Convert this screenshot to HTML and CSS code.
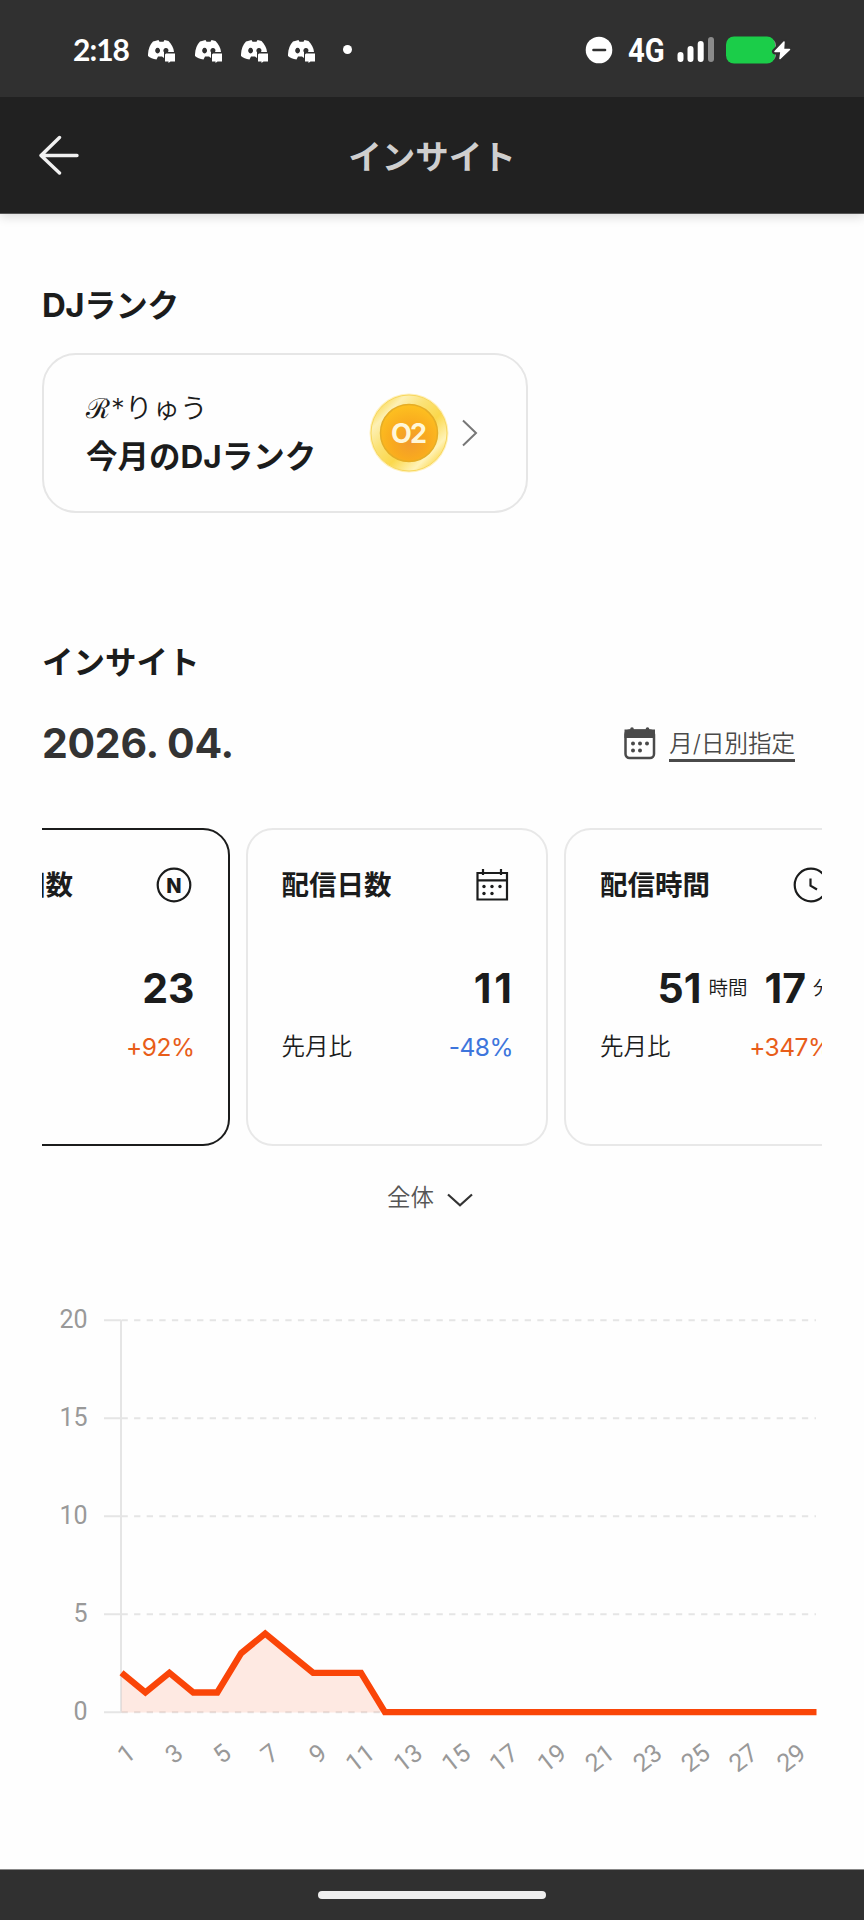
FILE: index.html
```html
<!DOCTYPE html>
<html lang="ja">
<head>
<meta charset="utf-8">
<title>インサイト</title>
<link rel="stylesheet" href="styles.css">
</head>
<body>
<svg class="defs" width="0" height="0">
  <defs>
    <symbol id="chat" viewBox="0 0 28 23">
      <path fill="#fff" fill-rule="evenodd" d="M7 1 L10.500 0 L11.500 1.800 H15.500 L16.500 0 L20.500 1 C23.500 4 25.800 8 26 12 H16 V18 L14 16.600 H10 L8.500 19.500 C5 19 2 17.600 0 16 C-.2 10 1.800 4.500 5 1.500 Z M9.600 7.800 A2.400 2.800 0 1 0 9.610 7.800 Z M17.500 8 A2.400 2.600 0 0 0 15.800 12 H20 A2.400 2.600 0 0 0 17.500 8 Z"/>
      <path fill="#fff" d="M18 13.500 H27 V21.500 H22.500 L20.500 23 V21.500 H17 V14.500 Z"/>
    </symbol>
  </defs>
</svg>

<div class="status">
  <div class="status-left">
    <span class="clock">2:18</span>
    <svg class="chat" width="28" height="23"><use href="#chat"/></svg>
    <svg class="chat" width="28" height="23"><use href="#chat"/></svg>
    <svg class="chat" width="28" height="23"><use href="#chat"/></svg>
    <svg class="chat" width="28" height="23"><use href="#chat"/></svg>
    <span class="dot"></span>
  </div>
  <div class="status-right">
    <svg width="28" height="28" viewBox="0 0 28 28"><circle cx="14" cy="14" r="13.300" fill="#fff"/><path d="M8.500 14h11.500" stroke="#303030" stroke-width="2.600" stroke-linecap="round"/></svg>
    <span class="network">4G</span>
    <svg class="bars" width="38" height="26" viewBox="0 0 38 26" stroke-width="6" stroke-linecap="round" stroke="#fff"><path d="M3.500 18v4M13.500 12v10M23.700 7v15"/><path d="M34 3v19" stroke="#8b8b8b"/></svg>
    <svg class="battery" width="66" height="28" viewBox="0 0 66 28"><rect x="20" y="3" width="30" height="22" rx="6" fill="#8b8b8b"/><rect x="0" y=".5" width="49" height="27" rx="8" fill="#1bcd49"/><path d="M58 6 49 15.500H55L54 22.500 63.500 13.500H57.500Z" fill="#fff" stroke="#303030" stroke-width="6" paint-order="stroke" stroke-linejoin="round"/><path d="M58 6 49 15.500H55L54 22.500 63.500 13.500H57.500Z" fill="#fff" stroke="#fff" stroke-width="1.500" stroke-linejoin="round"/></svg>
  </div>
</div>

<header class="header">
  <svg class="back" width="40" height="40" viewBox="0 0 40 40" fill="none" stroke="#f1f1f1" stroke-width="3.400" stroke-linecap="round" stroke-linejoin="round"><path d="M20.500 2.500 2 20.500 20.500 38M2 20.500H38"/></svg>
  <h1 class="header-title">インサイト</h1>
</header>

<main class="main">
  <h2 class="section-title rank-title">DJ<span class="kana">ランク</span></h2>
  <section class="rank-card">
    <div class="rank-text">
      <div class="rank-name"><span class="script">ℛ</span><span class="star">*</span>りゅう</div>
      <div class="rank-label">今月のDJランク</div>
    </div>
    <svg class="medal" width="82" height="82" viewBox="0 0 82 82">
      <defs>
        <linearGradient id="rim" x1="0.100" y1="0.100" x2="0.900" y2="0.900"><stop offset="0" stop-color="#fbd94f"/><stop offset=".16" stop-color="#fdf0b4"/><stop offset=".36" stop-color="#fbe277"/><stop offset=".6" stop-color="#fbd84c"/><stop offset=".84" stop-color="#fff3b8"/><stop offset="1" stop-color="#fbd648"/></linearGradient>
        <radialGradient id="core" cx=".52" cy=".65" r=".62"><stop offset="0" stop-color="#f19a2e"/><stop offset=".5" stop-color="#f9aa1e"/><stop offset="1" stop-color="#fdbf20"/></radialGradient>
      </defs>
      <circle cx="41" cy="41" r="39.500" fill="#fff1bd"/>
      <circle cx="41" cy="41" r="38" fill="url(#rim)" stroke="#f8d75d" stroke-width="1"/>
      <circle cx="41" cy="41" r="28.500" fill="url(#core)" stroke="#e6ad25" stroke-width="1.500"/>
      <text class="medal-text" x="41" y="50.500" text-anchor="middle" textLength="36">O2</text>
    </svg>
    <svg class="chevron" width="16" height="28" viewBox="0 0 16 28" fill="none" stroke="#777" stroke-width="2"><path d="M1 1.500 14 14 1 26.500"/></svg>
  </section>

  <h2 class="section-title insight-title">インサイト</h2>
  <div class="period">
    <span class="period-date">2026. 04.</span>
    <a class="period-pick">
      <svg width="32" height="34" viewBox="0 0 32 34"><rect x="1.500" y="4.500" width="28.500" height="27.500" rx="4" fill="#fff" stroke="#4a4a4a" stroke-width="2.500"/><path d="M.5 3.500H31V12H.5Z" fill="#4a4a4a"/><path d="M8 3v2M23.500 3v2" stroke="#4a4a4a" stroke-width="3.600" stroke-linecap="round"/><g fill="#4a4a4a"><circle cx="9" cy="17.500" r="2"/><circle cx="16" cy="17.500" r="2"/><circle cx="23" cy="17.500" r="2"/><circle cx="9" cy="24.500" r="2"/><circle cx="16" cy="24.500" r="2"/></g></svg>
      <span class="period-text">月/日別指定</span>
    </a>
  </div>

  <div class="cards">
    <article class="card active">
      <div class="card-head"><span>配信回数</span>
        <svg width="36" height="36" viewBox="0 0 36 36"><circle cx="18" cy="18" r="16.300" fill="none" stroke="#1b1c1c" stroke-width="2.200"/><text class="n" x="18" y="25.500" text-anchor="middle">N</text></svg>
      </div>
      <div class="card-value">23</div>
      <div class="card-diff"><span>先月比</span><span class="pct up">+92%</span></div>
    </article>
    <article class="card">
      <div class="card-head"><span>配信日数</span>
        <svg width="36" height="36" viewBox="0 0 36 36" fill="none" stroke="#1b1c1c" stroke-width="2.200"><path d="M3.500 6H33V32.500H3.500ZM3.500 13.300H33M9 2v6M27 2v6"/><g fill="#1b1c1c" stroke="none"><circle cx="10" cy="19.500" r="1.700"/><circle cx="18" cy="19.500" r="1.700"/><circle cx="26" cy="19.500" r="1.700"/><circle cx="10" cy="26.500" r="1.700"/><circle cx="18" cy="26.500" r="1.700"/></g></svg>
      </div>
      <div class="card-value ones">11</div>
      <div class="card-diff"><span>先月比</span><span class="pct down">-48%</span></div>
    </article>
    <article class="card">
      <div class="card-head"><span>配信時間</span>
        <svg width="36" height="36" viewBox="0 0 36 36" fill="none" stroke="#1b1c1c" stroke-width="2.200"><circle cx="18" cy="18" r="16.300"/><path d="M17.500 11.500V18.700L24 22.500"/></svg>
      </div>
      <div class="card-value time"><span>51</span><span class="unit">時間</span><span class="minutes">17</span><span class="unit">分</span></div>
      <div class="card-diff"><span>先月比</span><span class="pct up">+347%</span></div>
    </article>
  </div>

  <div class="filter">
    <span>全体</span>
    <svg width="26" height="14" viewBox="0 0 26 14" fill="none" stroke="#333" stroke-width="2.200"><path d="M1 1.500 13 12.300 25 1.500"/></svg>
  </div>

  <svg class="chart" width="864" height="500" viewBox="0 1300 864 500">
    <g fill="none" stroke="#e5e5e5" stroke-width="2">
      <path d="M104 1320.200H121M104 1418.200H121M104 1516.200H121M104 1614.200H121M104 1712.200H121M121 1320V1713"/>
      <path stroke-dasharray="6.300" d="M121.500 1320.200H816M121.500 1418.200H816M121.500 1516.200H816M121.500 1614.200H816M121.500 1712.200H816"/>
    </g>
    <path fill="#fc4100" fill-opacity=".11" d="M121.500 1672.800 145.400 1692.500 169.400 1672.800 193.300 1692.500H217.300L241.200 1653.200 265.200 1633.600 289.100 1653.200 313.100 1672.800H361L384.900 1712.500H121.500Z"/>
    <path fill="none" stroke="#fa4508" stroke-width="6.300" d="M121.500 1672.800 145.400 1692.500 169.400 1672.800 193.300 1692.500H217.300L241.200 1653.200 265.200 1633.600 289.100 1653.200 313.100 1672.800H361L384.900 1712.200H816.500"/>
    <g class="axis" text-anchor="end">
      <text x="87.500" y="1328">20</text><text x="87.500" y="1426">15</text><text x="87.500" y="1524">10</text><text x="87.500" y="1622">5</text><text x="87.500" y="1719.500">0</text>
      <text transform="translate(137 1756) rotate(-38)">1</text>
      <text transform="translate(184.900 1756) rotate(-38)">3</text>
      <text transform="translate(232.800 1756) rotate(-38)">5</text>
      <text transform="translate(280.700 1756) rotate(-38)">7</text>
      <text transform="translate(328.600 1756) rotate(-38)">9</text>
      <text transform="translate(376.500 1756) rotate(-38)">11</text>
      <text transform="translate(424.400 1756) rotate(-38)">13</text>
      <text transform="translate(472.300 1756) rotate(-38)">15</text>
      <text transform="translate(520.200 1756) rotate(-38)">17</text>
      <text transform="translate(568.100 1756) rotate(-38)">19</text>
      <text transform="translate(616 1756) rotate(-38)">21</text>
      <text transform="translate(663.900 1756) rotate(-38)">23</text>
      <text transform="translate(711.800 1756) rotate(-38)">25</text>
      <text transform="translate(759.700 1756) rotate(-38)">27</text>
      <text transform="translate(807.600 1756) rotate(-38)">29</text>
    </g>
  </svg>
</main>

<footer class="nav"><span class="handle"></span></footer>
</body>
</html>
```

FILE: styles.css
```css
* { box-sizing: border-box; }
body {
  margin: 0;
  width: 864px;
  height: 1920px;
  overflow: hidden;
  display: flex;
  flex-direction: column;
  background: #fefefe;
  color: #1b1c1c;
  font-family: Inter, "Noto Sans CJK JP", sans-serif;
}
svg { display: block; flex: none; }
.defs { position: absolute; }
h1, h2 { margin: 0; }

.status {
  height: 97px;
  flex: none;
  background: #303030;
  display: flex;
  justify-content: space-between;
  padding: 0 72px 0 73px;
  color: #fff;
}
.status-left, .status-right { display: flex; align-items: center; height: 99px; }
.clock { font: 700 30px/30px Lato, sans-serif; width: 75px; letter-spacing: -1px; margin-top: -2px; }
.chat { margin: 3px 18.500px 0 0; }
.dot { width: 9px; height: 9px; border-radius: 50%; background: #fff; margin-left: 9px; }
.network { font: 700 34px/34px Roboto, sans-serif; width: 49px; margin-left: 15px; transform: scaleX(.86); transform-origin: left; }
.battery { margin-left: 11px; }

.header {
  height: 117px;
  flex: none;
  position: relative;
  background: #212121;
  border-bottom: 1px solid #555;
  box-shadow: 0 3px 10px rgba(0, 0, 0, .14);
  clip-path: inset(0 0 -20px 0);
  display: grid;
  grid-template-columns: 80px 1fr 80px;
  align-items: center;
}
.back { margin-left: 38.500px; }
.header-title { text-align: center; font-size: 33.500px; line-height: 40px; color: #cfcfcf; font-weight: 700; padding-top: 3px; }

.main { flex: 1; padding-top: 71px; }
.section-title { height: 40px; margin-left: 42px; font-size: 31.500px; line-height: 40px; font-weight: 700; white-space: nowrap; }
.rank-title { font-size: 33px; letter-spacing: -.5px; }
.kana { font-size: 32px; }

.rank-card {
  margin: 28px 0 0 42px;
  width: 486px;
  height: 160px;
  border: 2px solid #e6e6e6;
  border-radius: 34px;
  display: flex;
  align-items: center;
  padding-left: 42px;
}
.rank-text { width: 282px; white-space: nowrap; }
.rank-name { height: 48px; line-height: 46px; font-size: 27.500px; font-weight: 350; }
.script { font-family: "DejaVu Serif", "DejaVu Sans", serif; display: inline-block; width: 25px; }
.star { display: inline-block; width: 14px; }
.rank-label { height: 48px; line-height: 48px; font-size: 31.500px; font-weight: 700; }
.medal-text { font: 700 27px Inter, sans-serif; fill: #fff7d9; }
.chevron { margin-left: 12px; }

.insight-title { margin-top: 130px; }
.period { margin: 40px 69px 0 42px; height: 40px; display: flex; justify-content: space-between; align-items: center; }
.period-date { font-size: 41px; line-height: 40px; font-weight: 700; color: #333; letter-spacing: -.3px; }
.period-pick { display: flex; align-items: center; gap: 13px; color: #4a4a4a; }
.period-text { height: 36px; margin-top: 1px; font-size: 23.500px; line-height: 36px; font-weight: 350; border-bottom: 3px solid #4a4a4a; white-space: nowrap; }

.cards { margin: 65px 42px 0; height: 318px; overflow: hidden; display: flex; gap: 16px; }
.card {
  flex: none;
  width: 302.500px;
  height: 318px;
  border: 2px solid #e8e8e8;
  border-radius: 27px;
  padding: 34px 33px 0 34px;
}
.card.active { margin-left: -115px; border-color: #1b1c1c; }
.card-head { height: 42px; display: flex; justify-content: space-between; align-items: center; font-size: 27.500px; line-height: 42px; font-weight: 700; }
.card-head svg { margin-right: 3px; }
.n { font: 800 20px Inter, sans-serif; fill: #1b1c1c; }
.card-value { height: 50px; margin-top: 57px; line-height: 50px; text-align: right; font-size: 41px; font-weight: 700; }
.ones { letter-spacing: 3px; margin-right: -2px; }
.time { display: flex; justify-content: flex-end; margin-right: -1px; }
.unit { font-size: 19.500px; font-weight: 350; margin-left: 7px; }
.minutes { margin-left: 17px; }
.card-diff { height: 34px; margin-top: 17px; display: flex; justify-content: space-between; font-size: 23.500px; line-height: 34px; font-weight: 350; }
.pct { font-size: 24.500px; font-weight: 400; letter-spacing: -.5px; }
.up { color: #e85d19; }
.down { color: #3d75dc; }

.filter { margin: 32px 0 0 387px; height: 40px; display: flex; align-items: center; gap: 13px; font-size: 23.500px; line-height: 40px; font-weight: 350; color: #555; }
.filter svg { margin-top: 3px; }
.chart { margin-top: 82px; }
.axis { font: 400 25px Roboto, sans-serif; fill: #999; }

.nav { height: 51px; flex: none; background: #303030; border-top: 1px solid #888; display: flex; justify-content: center; padding-top: 21px; }
.handle { width: 228px; height: 8px; border-radius: 4px; background: #eee; }
```
